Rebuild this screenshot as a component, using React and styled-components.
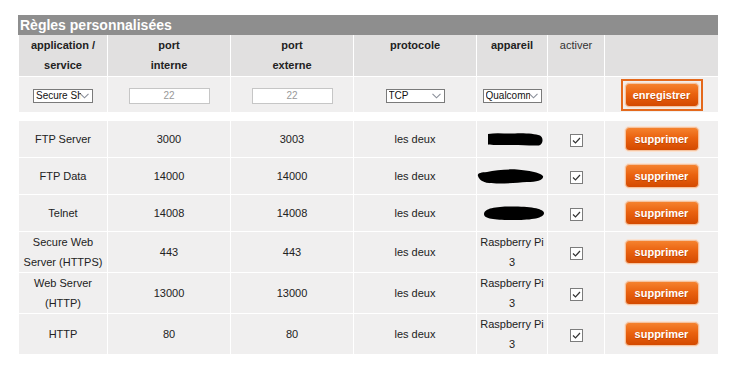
import React from 'react'
import styled, { createGlobalStyle } from 'styled-components'

const GlobalStyle = createGlobalStyle`
    body {
        margin: 0;
        background: #fff;
        font-family: "Liberation Sans", Arial, sans-serif;
        color: #222;
    }
`

const Page = styled.div`
    padding: 15px 0 0 18px;
`

const Panel = styled.div`
    width: 700px;
`

const Title = styled.div`
    background: #8e8e8e;
    color: #fff;
    font-weight: bold;
    font-size: 14px;
    height: 20px;
    line-height: 21px;
    padding-left: 2px;
`

const Table = styled.table`
    width: 700px;
    border-collapse: collapse;
    table-layout: fixed;
    font-size: 11px;
    text-align: center;
`

const Head = styled.th`
    background: #e1e0e0;
    border: 1px solid #fff;
    border-top: 0;
    height: 41px;
    padding: 0;
    line-height: 20px;
    vertical-align: top;
    font-weight: ${props => props.$light ? 'normal' : 'bold'};
    color: ${props => props.$light ? '#333' : '#222'};
`

const Cell = styled.td`
    background: #f0efef;
    border: 1px solid #fff;
    padding: 0;
    line-height: 20px;
    vertical-align: middle;
    height: ${props => props.$h || 36}px;
`

const Spacer = styled.td`
    height: 7px;
    padding: 0;
    border: 0;
`

const SelectWrap = styled.span`
    position: relative;
    display: inline-block;
    vertical-align: middle;
`

const Select = styled.select`
    appearance: none;
    width: ${props => props.$w}px;
    height: 14px;
    border: 1px solid #7a7a7a;
    border-radius: 0;
    background: #fff;
    font-family: "Liberation Sans", Arial, sans-serif;
    font-size: 10px;
    line-height: 12px;
    padding: 0 11px 0 2px;
    color: #111;
    display: block;
    overflow: hidden;
`

const Chevron = styled.svg`
    position: absolute;
    right: 4px;
    top: 4px;
    pointer-events: none;
`

const TextInput = styled.input`
    width: 81px;
    height: 16px;
    box-sizing: border-box;
    border: 1px solid #c6c6c6;
    background: #fff;
    text-align: center;
    font-family: "Liberation Sans", Arial, sans-serif;
    font-size: 10px;
    color: #999;
    padding: 0;
    vertical-align: middle;
`

const FocusRing = styled.span`
    display: inline-block;
    border: 2px solid #e4691c;
    padding: 2px;
    line-height: 0;
    vertical-align: middle;
`

const Button = styled.button`
    width: 74px;
    height: 24px;
    margin: ${props => props.$bare ? '0' : '6px 0'};
    padding: 0;
    border: 1px solid #f4c3a0;
    border-radius: 4px;
    background: linear-gradient(to bottom, #f5822e 0%, #ea620f 45%, #d44a00 100%);
    box-shadow: 0 0 0 1px #fbe3d2;
    color: #fff;
    font-family: "Liberation Sans", Arial, sans-serif;
    font-weight: bold;
    font-size: 11px;
    line-height: 20px;
    text-shadow: 0 1px 0 rgba(120, 40, 0, 0.35);
    vertical-align: middle;
    outline: none;
`

const Check = styled.span`
    display: inline-block;
    width: 13px;
    height: 13px;
    box-sizing: border-box;
    border: 1px solid #7c7c7c;
    background: #fff;
    vertical-align: middle;
    line-height: 0;
`

const Blob = styled.svg`
    display: block;
    margin: 0 auto;
`

const blobs = [
    'M11 3 C20 1.5 30 3 38 2.5 C48 2 58 3 63 4.5 C67 7 66 13 62 14.5 C52 15 42 13.5 30 14 C22 14 15 14 11 13.5 Z',
    'M1 8 C0 5 4 4.5 10 4 C18 2 30 1 40 1.5 C52 2.5 62 4 66 8 C67 12 60 14 50 14 C38 15 22 16 12 15 C5 14.5 2 11 1 8 Z',
    'M7 9 C7 3 20 1.5 35 1.5 C52 1.5 66 3 67 8 C67 13 55 15 38 15 C20 15 7 14.5 7 9 Z',
]

const rules = [
    { name: ['FTP Server'], int: '3000', ext: '3003', blob: 0 },
    { name: ['FTP Data'], int: '14000', ext: '14000', blob: 1 },
    { name: ['Telnet'], int: '14008', ext: '14008', blob: 2 },
    { name: ['Secure Web', 'Server (HTTPS)'], int: '443', ext: '443' },
    { name: ['Web Server', '(HTTP)'], int: '13000', ext: '13000' },
    { name: ['HTTP'], int: '80', ext: '80' },
]

function Dropdown({ width, value }) {
    return (
        <SelectWrap>
            <Select $w={width} defaultValue={value}>
                <option>{value}</option>
            </Select>
            <Chevron width="9" height="6" viewBox="0 0 9 6">
                <polyline points="0.5,0.8 4.5,4.8 8.5,0.8" fill="none" stroke="#8a8f99" strokeWidth="1.1" />
            </Chevron>
        </SelectWrap>
    )
}

function Lines({ lines }) {
    return lines.map((l, i) => <React.Fragment key={i}>{i > 0 && <br />}{l}</React.Fragment>)
}

function App() {
    return (
        <Page>
            <GlobalStyle />
            <Panel>
                <Title>Règles personnalisées</Title>
                <Table>
                    <colgroup>
                        <col style={{ width: 89 }} />
                        <col style={{ width: 123 }} />
                        <col style={{ width: 123 }} />
                        <col style={{ width: 123 }} />
                        <col style={{ width: 71 }} />
                        <col style={{ width: 57 }} />
                        <col style={{ width: 114 }} />
                    </colgroup>
                    <thead>
                        <tr>
                            <Head>application /<br />service</Head>
                            <Head>port<br />interne</Head>
                            <Head>port<br />externe</Head>
                            <Head>protocole</Head>
                            <Head>appareil</Head>
                            <Head $light>activer</Head>
                            <Head></Head>
                        </tr>
                    </thead>
                    <tbody>
                        <tr>
                            <Cell $h={35}><Dropdown width={60} value="Secure Shell" /></Cell>
                            <Cell $h={35}><TextInput defaultValue="22" /></Cell>
                            <Cell $h={35}><TextInput defaultValue="22" /></Cell>
                            <Cell $h={35}><Dropdown width={59} value="TCP" /></Cell>
                            <Cell $h={35}><Dropdown width={59} value="Qualcomm" /></Cell>
                            <Cell $h={35}></Cell>
                            <Cell $h={35}>
                                <FocusRing><Button $bare>enregistrer</Button></FocusRing>
                            </Cell>
                        </tr>
                        <tr><Spacer colSpan={7} /></tr>
                        {rules.map((r, i) => (
                            <tr key={i}>
                                <Cell><Lines lines={r.name} /></Cell>
                                <Cell>{r.int}</Cell>
                                <Cell>{r.ext}</Cell>
                                <Cell>les deux</Cell>
                                <Cell>
                                    {r.blob !== undefined ? (
                                        <Blob width="70" height="16" viewBox="0 0 70 16">
                                            <path d={blobs[r.blob]} fill="#000" />
                                        </Blob>
                                    ) : (
                                        <>Raspberry Pi<br />3</>
                                    )}
                                </Cell>
                                <Cell>
                                    <Check>
                                        <svg width="11" height="11" viewBox="0 0 11 11">
                                            <polyline points="2,5.5 4.5,8 9,3" fill="none" stroke="#333" strokeWidth="1.2" />
                                        </svg>
                                    </Check>
                                </Cell>
                                <Cell><Button>supprimer</Button></Cell>
                            </tr>
                        ))}
                    </tbody>
                </Table>
            </Panel>
        </Page>
    )
}

export default App
